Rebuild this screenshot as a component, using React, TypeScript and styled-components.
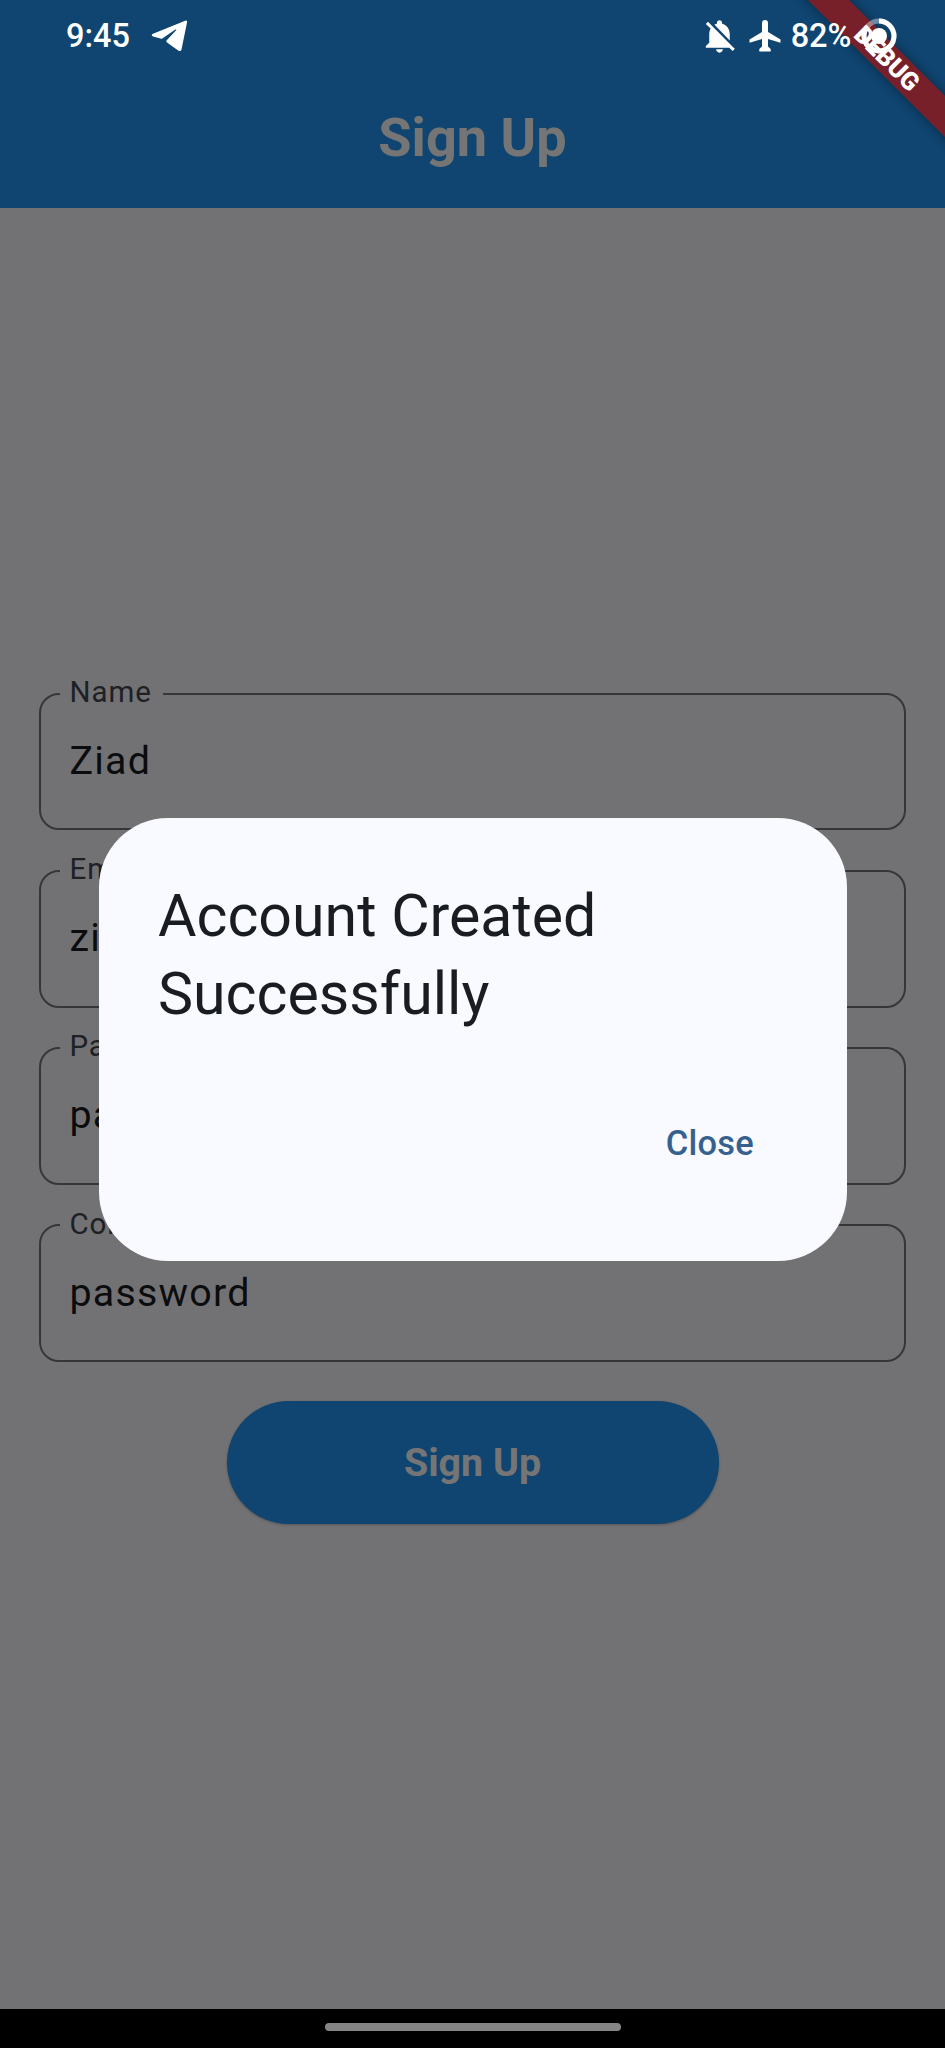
import React from "react";
import styled, { createGlobalStyle } from "styled-components";

const GlobalStyle = createGlobalStyle`
  * { box-sizing: border-box; }
  body { margin: 0; background: #000; font-family: Roboto, "Liberation Sans", sans-serif; }
`;

const Screen = styled.div`
  position: relative;
  width: 945px;
  height: 2048px;
  display: flex;
  flex-direction: column;
  overflow: hidden;
`;

const AppBar = styled.header`
  flex: none;
  height: 208px;
  padding-top: 66px;
  display: flex;
  align-items: center;
  justify-content: center;
  background: #2196f3;
`;

const AppBarTitle = styled.h1`
  margin: 0;
  color: #fff;
  font-size: 54.1px;
  font-weight: 700;
  line-height: 69px;
`;

const Form = styled.main`
  flex: 1;
  display: flex;
  flex-direction: column;
  align-items: center;
  gap: 39.4px;
  padding: 484.6px 39.4px 0;
  background: #f9f9ff;
`;

const Field = styled.label`
  position: relative;
  flex: none;
  display: flex;
  align-items: center;
  width: 100%;
  height: 137.8px;
  padding: 0 28px 2px;
  border: 2px solid #73777f;
  border-radius: 20px;
`;

const FieldLabel = styled.span`
  position: absolute;
  left: 18.6px;
  top: -20.6px;
  padding: 0 11.5px 0 9.5px;
  background: #f9f9ff;
  color: #43474e;
  font-size: 29.5px;
  line-height: 36px;
  letter-spacing: 0.92px;
`;

const FieldValue = styled.span`
  color: #191c20;
  font-size: 39.4px;
  line-height: 59px;
  letter-spacing: 1.23px;
`;

const SubmitButton = styled.button`
  flex: none;
  width: 492px;
  height: 123px;
  padding: 1px 0 0;
  border: 0;
  border-radius: 62px;
  background: #2196f3;
  color: #fff;
  font: 700 39.4px/56px Roboto, sans-serif;
  box-shadow: 0 1px 3px rgba(0, 0, 0, 0.25);
`;

const NavBar = styled.footer`
  flex: none;
  height: 39px;
  display: flex;
  justify-content: center;
  padding-top: 14px;
  background: #000;
`;

const NavHandle = styled.div`
  width: 296px;
  height: 8px;
  border-radius: 4px;
  background: #858585;
`;

const Barrier = styled.div`
  position: absolute;
  inset: 0 0 39px;
  display: flex;
  justify-content: center;
  align-items: flex-start;
  padding-top: 817.6px;
  background: rgba(0, 0, 0, 0.54);
`;

const Dialog = styled.section`
  display: flex;
  flex-direction: column;
  width: 748px;
  height: 443.4px;
  padding: 59px 58px 58px 59.5px;
  border-radius: 69px;
  background: #f9faff;
`;

const DialogTitle = styled.h2`
  margin: 0;
  color: #191c20;
  font-size: 59.06px;
  font-weight: 400;
  line-height: 78.75px;
`;

const DialogActions = styled.div`
  display: flex;
  justify-content: flex-end;
  margin-top: 60px;
`;

const TextButton = styled.button`
  height: 98px;
  padding: 0 34.5px;
  border: 0;
  background: none;
  color: #36618e;
  font: 500 34.45px/49px Roboto, sans-serif;
  letter-spacing: 0.25px;
`;

const DebugBanner = styled.div`
  position: absolute;
  left: 736.5px;
  top: 44px;
  width: 300px;
  height: 29px;
  transform: rotate(45deg);
  background: #78202a;
  box-shadow: 0 0 12px rgba(0, 0, 0, 0.4);
  color: #fff;
  font-size: 25.1px;
  font-weight: 900;
  line-height: 29px;
  text-align: center;
`;

const StatusBar = styled.div`
  position: absolute;
  inset: 0 0 auto;
  height: 72px;
  display: flex;
  justify-content: space-between;
  padding: 0 48px 0 66px;
  color: #fff;
`;

const StatusGroup = styled.div<{ $gap: number }>`
  display: flex;
  align-items: center;
  gap: ${(p) => p.$gap}px;
`;

const StatusText = styled.span`
  font-size: 32.5px;
  font-weight: 500;
  line-height: 40px;
`;

const fields = [
  ["Name", "Ziad"],
  ["Email", "ziad@gmail.com"],
  ["Password", "password"],
  ["Confirm Password", "password"],
];

const TelegramIcon = () => (
  <svg width="36" height="32" viewBox="0 0 36 32" fill="#fff">
    <path d="M34.2.8 2 13.8c-1.7.7-1.7 2 .1 2.6l7.2 2.2c.9.3 1.7.1 2.4-.4L24 9.7c1-.6 1.7.1.9.8L15.7 20.3c-.7.8-.6 1.5.3 2.2l11.2 7.9c1.7 1.1 3 .6 3.4-1.5L36 2.5C36.3.8 35.6.2 34.2.8Z" />
  </svg>
);

const BellOffIcon = () => (
  <svg width="41" height="40" viewBox="0 0 24 24" fill="#fff" preserveAspectRatio="none">
    <path d="M20 18.69L7.84 6.14 5.27 3.49 4 4.76l2.8 2.8v.01c-.52.99-.8 2.16-.8 3.42v5l-2 2v1h13.73l2 2L21 19.72l-1-1.03zM12 22c1.11 0 2-.89 2-2h-4c0 1.11.89 2 2 2zM18 14.68V11c0-3.08-1.64-5.64-4.5-6.32V4c0-.83-.67-1.5-1.5-1.5s-1.5.67-1.5 1.5v.68c-.5.11-.95.29-1.44.55L18 14.68z" />
  </svg>
);

const AirplaneIcon = () => (
  <svg width="32" height="32" viewBox="0 0 32 32" fill="#fff">
    <path d="M13 3a3 3 0 0 1 6 0v9l12.5 7.5v3.3L19 19v7.5l2.7 2.5v2.5H10.3V29l2.7-2.5V19L.5 22.8v-3.3L13 12Z" />
  </svg>
);

const BatteryIcon = () => (
  <svg width="36" height="36" viewBox="0 0 36 36" fill="none">
    <circle cx="18" cy="18" r="15" stroke="#fff" strokeOpacity=".4" strokeWidth="5" />
    <circle cx="18" cy="18" r="15" stroke="#fff" strokeWidth="5" pathLength="100" strokeDasharray="82 18" transform="rotate(-90 18 18)" />
    <circle cx="18" cy="18" r="8" fill="#fff" />
  </svg>
);

export default function App() {
  return (
    <>
      <GlobalStyle />
      <Screen>
        <AppBar>
          <AppBarTitle>Sign Up</AppBarTitle>
        </AppBar>
        <Form>
          {fields.map(([label, value]) => (
            <Field key={label}>
              <FieldLabel>{label}</FieldLabel>
              <FieldValue>{value}</FieldValue>
            </Field>
          ))}
          <SubmitButton>Sign Up</SubmitButton>
        </Form>
        <NavBar>
          <NavHandle />
        </NavBar>
        <Barrier>
          <Dialog>
            <DialogTitle>Account Created Successfully</DialogTitle>
            <DialogActions>
              <TextButton>Close</TextButton>
            </DialogActions>
          </Dialog>
        </Barrier>
        <DebugBanner>DEBUG</DebugBanner>
        <StatusBar>
          <StatusGroup $gap={21}>
            <StatusText>9:45</StatusText>
            <TelegramIcon />
          </StatusGroup>
          <StatusGroup $gap={9.5}>
            <BellOffIcon />
            <AirplaneIcon />
            <StatusText>82%</StatusText>
            <BatteryIcon />
          </StatusGroup>
        </StatusBar>
      </Screen>
    </>
  );
}
